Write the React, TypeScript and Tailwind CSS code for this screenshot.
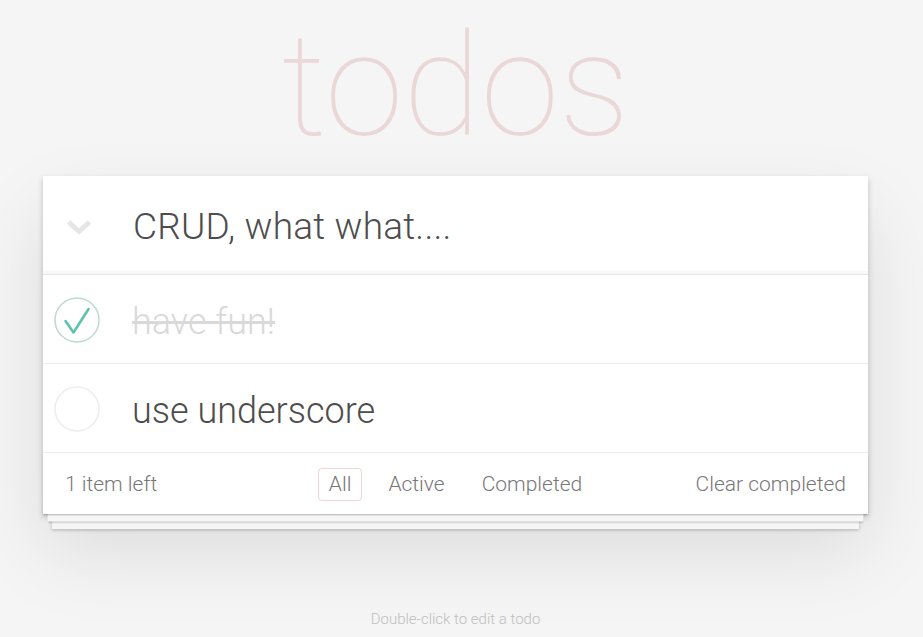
import { useState } from 'react';

type Todo = { id: number; title: string; completed: boolean };

const initialTodos: Todo[] = [
  { id: 1, title: 'have fun!', completed: true },
  { id: 2, title: 'use underscore', completed: false },
];

function CheckCircle({ checked }: { checked: boolean }) {
  return (
    <svg width="46" height="46" viewBox="0 0 46 46" fill="none">
      <circle cx="23" cy="23" r="22" stroke={checked ? '#bddad5' : '#ededed'} strokeWidth="1.5" />
      {checked && (
        <path d="M11.5 24 L19.5 35.5 L34.5 12" stroke="#5dc2af" strokeWidth="2.6" strokeLinecap="round" strokeLinejoin="round" />
      )}
    </svg>
  );
}

export default function App() {
  const [todos, setTodos] = useState<Todo[]>(initialTodos);
  const [filter, setFilter] = useState('All');
  const left = todos.filter((t) => !t.completed).length;

  const toggle = (id: number) =>
    setTodos((prev) => prev.map((t) => (t.id === id ? { ...t, completed: !t.completed } : t)));

  return (
    <div className="min-h-[637px] bg-[#f5f5f5] font-['Roboto','Liberation_Sans',sans-serif] font-light text-[#4d4d4d]">
      <div className="w-[911px]">
        {/* title */}
        <h1 className="pt-[3px] text-center text-[142px] leading-[168px] font-thin text-[#ead7d7]">
          todos
        </h1>

        {/* card */}
        <section className="relative mx-auto mt-[5px] w-[825px] bg-white shadow-[0_3px_6px_0_rgba(0,0,0,0.2),0_37px_75px_0_rgba(0,0,0,0.1)]">
          <header className="flex h-[99px] items-center border-b border-[#e6e6e6] pt-[4px] shadow-[inset_0_-3px_1.5px_rgba(0,0,0,0.03)]">
            <div className="mr-[18px] flex w-[72px] justify-center">
              <svg width="26" height="16" viewBox="0 0 26 16" fill="none">
                <path d="M2.5 3 L13 12.5 L23.5 3" stroke="#e6e6e6" strokeWidth="5" strokeLinejoin="miter" />
              </svg>
            </div>
            <span className="text-[37px] leading-[50px] tracking-[0.2px] text-[#4d4d4d]">CRUD, what what....</span>
          </header>

          <ul>
            {todos.map((todo) => (
              <li key={todo.id} className="flex h-[89px] items-center border-b border-[#ededed] pt-[2px]">
                <button onClick={() => toggle(todo.id)} className="ml-[11px] mr-[32px] flex">
                  <CheckCircle checked={todo.completed} />
                </button>
                <span
                  className={`pt-[3px] text-[36px] leading-[50px] ${
                    todo.completed ? 'text-[#d9d9d9] line-through' : 'text-[#4d4d4d]'
                  }`}
                >
                  {todo.title}
                </span>
              </li>
            ))}
          </ul>

          <footer className="relative grid h-[61px] grid-cols-[1fr_auto_1fr] items-center px-[22px] pt-[1px] text-[21px] text-[#777] shadow-[0_1.5px_1.5px_rgba(0,0,0,0.2),0_12px_0_-4.5px_#f6f6f6,0_13.5px_1.5px_-4.5px_rgba(0,0,0,0.2),0_24px_0_-9px_#f6f6f6,0_25.5px_3px_-9px_rgba(0,0,0,0.2)]">
            <span className="leading-[30px]">
              {left} item{left === 1 ? '' : 's'} left
            </span>
            <div className="flex gap-[15px]">
              {['All', 'Active', 'Completed'].map((f) => (
                <button
                  key={f}
                  onClick={() => setFilter(f)}
                  className={`rounded-[4px] border px-[10px] py-[2px] leading-[27px] ${
                    filter === f ? 'border-[rgba(175,47,47,0.2)]' : 'border-transparent'
                  }`}
                >
                  {f}
                </button>
              ))}
            </div>
            <button className="justify-self-end leading-[30px]">Clear completed</button>
          </footer>
        </section>

        <p className="mt-[95px] text-center text-[15px] leading-[20px] text-[#bfbfbf]">
          Double-click to edit a todo
        </p>
      </div>
    </div>
  );
}
